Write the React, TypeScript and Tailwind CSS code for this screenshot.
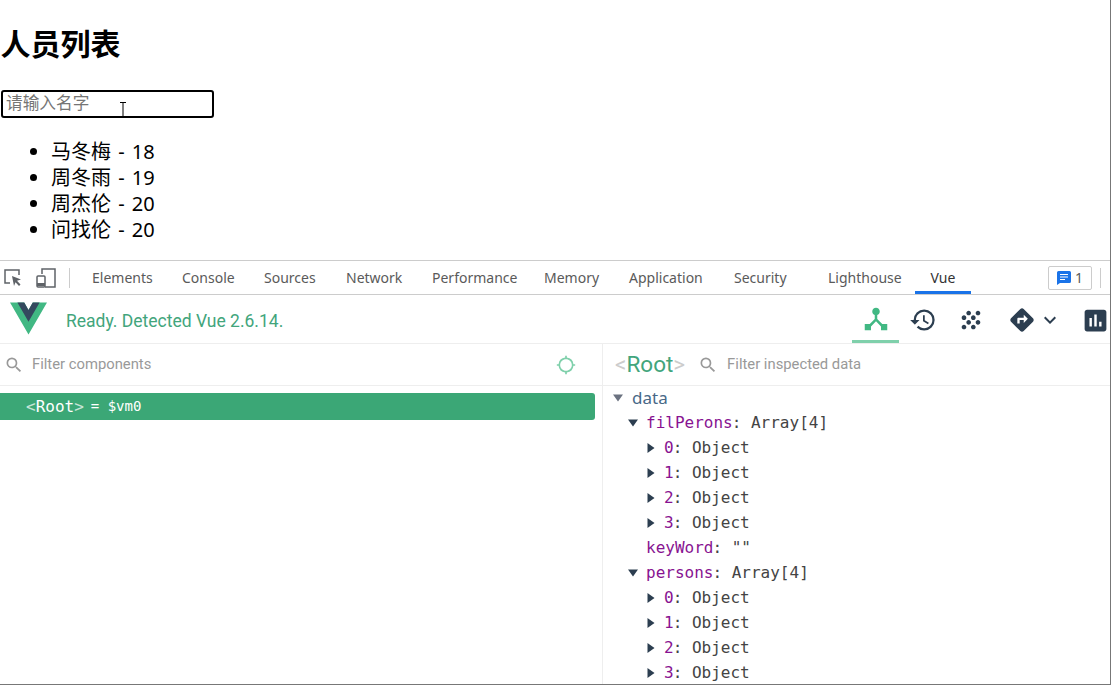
import type { ReactNode } from "react";
import { MdAssessment, MdDeviceHub, MdDirections, MdGpsNotFixed, MdGrain, MdHistory, MdKeyboardArrowDown, MdSearch } from "react-icons/md";

const people = ["马冬梅 - 18", "周冬雨 - 19", "周杰伦 - 20", "问找伦 - 20"];

const tabs = [
	{ label: "Elements", className: "w-[90px]" },
	{ label: "Console", className: "w-[82px]" },
	{ label: "Sources", className: "w-[82px]" },
	{ label: "Network", className: "w-[86px]" },
	{ label: "Performance", className: "w-[112px]" },
	{ label: "Memory", className: "w-[85px]" },
	{ label: "Application", className: "w-[105px]" },
	{ label: "Security", className: "w-[94px]" },
	{ label: "Lighthouse", className: "w-[92px]" },
];

const cjk = "font-['Noto_Sans','Noto_Sans_CJK_SC',sans-serif]";
const ui = "font-['Noto_Sans',sans-serif]";
const mono = "font-['DejaVu_Sans_Mono',monospace]";

function Arrow(props: Readonly<{ open?: boolean; muted?: boolean }>): ReactNode {
	const { open, muted } = props;

	return (
		<svg className="h-[10px] w-[10px] shrink-0" viewBox="0 0 10 10">
			<path d={open ? "M0 1.5h10L5 8.5z" : "M1.5 0v10L8.5 5z"} fill={muted ? "#6b7280" : "#2c3e50"} />
		</svg>
	);
}

function Row(props: Readonly<{ label: string; value: string; indent: string; arrow?: "open" | "closed" }>): ReactNode {
	const { label, value, indent, arrow } = props;

	return (
		<div className={`flex h-[25px] items-center ${indent}`}>
			{arrow ? (
				<div className="mr-2 flex w-[10px]">
					<Arrow open={arrow === "open"} />
				</div>
			) : null}
			<span className="text-[#881391]">{label}</span>
			<span className="ml-[-1px] text-[#444]">: {value}</span>
		</div>
	);
}

function ObjectRows(): ReactNode {
	return (
		<>
			{["0", "1", "2", "3"].map((key) => (
				<Row arrow="closed" indent="pl-[43px]" key={key} label={key} value="Object" />
			))}
		</>
	);
}

export default function App(): ReactNode {
	return (
		<div className="flex h-[685px] w-[1111px] flex-col overflow-hidden border-r border-b border-[#777] bg-white text-black">
			<div className={`h-[260px] shrink-0 pl-px ${cjk}`}>
				<h1 className="ml-[-0.5px] pt-[22px] text-[30px] leading-[44px] font-bold">人员列表</h1>
				<div className="relative mt-[24px] w-[213px]">
					<input
						className="block h-[28px] w-full rounded-[3px] border-2 border-black pb-[3px] pl-[3px] text-[16.700px] outline-none placeholder:text-[#757575]"
						placeholder="请输入名字"
						readOnly
					/>
					{/* text cursor caught in the capture */}
					<svg className="absolute top-[12px] left-[118px] h-[16px] w-[8px]" fill="none" stroke="#000" viewBox="0 0 8 16">
						<path d="M1 .5h6M4 .5v15M1 15.500h6" />
					</svg>
				</div>
				<ul className="mt-[21px] list-disc pl-[50px] text-[20px] leading-[26px] [word-spacing:2px]">
					{people.map((person) => (
						<li key={person}>{person}</li>
					))}
				</ul>
			</div>

			<div className={`flex h-[35px] shrink-0 items-center border-y border-[#ccc] text-[14px] text-[#5a5a5a] ${ui}`}>
				<svg className="ml-[4px] h-[18px] w-[19px]" fill="none" stroke="#5f6368" strokeWidth="1.5" viewBox="0 0 19 18">
					<path d="M6 14H1V1h14v5" />
					<path d="M8 7l9 3.5-4 1.2 3.5 3.8-1.5 1.5-3.5-3.8L10 17z" fill="#5f6368" stroke="none" />
				</svg>
				<svg className="ml-[13px] h-[20px] w-[20px]" fill="none" stroke="#5f6368" strokeWidth="1.5" viewBox="0 0 20 20">
					<path d="M6 6V1h13v18H9" />
					<rect height="11" rx="1" width="8" x="1" y="8" />
					<path d="M1 16.500h8" strokeWidth="3" />
				</svg>
				<div className="mr-[17px] ml-[13px] h-[20px] w-px bg-[#ccc]" />
				{tabs.map((tab) => (
					<div className={`shrink-0 pl-[5px] ${tab.className}`} key={tab.label}>
						{tab.label}
					</div>
				))}
				<div className="flex h-full w-[56px] shrink-0 items-center justify-center border-b-[3px] border-[#1a73e8] pt-[3px] text-[#333]">
					Vue
				</div>
				<div className="ml-[77px] flex h-[24px] w-[44px] shrink-0 items-center justify-center gap-[4px] rounded-[2px] border border-[#ccc]">
					<svg className="h-[14px] w-[14px]" viewBox="0 0 14 14">
						<path d="M1.5 0h11A1.5 1.5 0 0 1 14 1.5v9a1.5 1.5 0 0 1-1.5 1.5H3l-3 2V1.5A1.5 1.5 0 0 1 1.500 0z" fill="#1a73e8" />
						<path d="M3 3.500h8M3 6h8M3 8.500h5" stroke="#fff" />
					</svg>
					<span>1</span>
				</div>
				<div className="ml-[8px] h-[20px] w-px bg-[#ccc]" />
			</div>

			<div className="flex h-[49px] shrink-0 items-center border-b border-[#eee] font-['Roboto',sans-serif]">
				<svg className="mb-[1px] ml-[10px] h-[33px] w-[37px] shrink-0" viewBox="0 0 261.76 226.69">
					<path d="M161.096.001l-30.225 52.351L100.647.001H-.005l130.877 226.688L261.749.001z" fill="#41b883" />
					<path d="M161.096.001l-30.225 52.351L100.647.001H52.346l78.526 136.01L209.398.001z" fill="#34495e" />
				</svg>
				<span className="mt-[4px] ml-[19px] w-[217px] shrink-0 text-[17.500px] whitespace-nowrap text-[#42a57c]">Ready. Detected Vue 2.6.14.</span>
				<div className="ml-[569px] flex h-full w-[47px] shrink-0 items-center justify-center border-b-[3px] border-[#7fd0ab] pt-[2px] text-[#41b883]">
					<MdDeviceHub size={30} />
				</div>
				<MdHistory className="mt-[2px] ml-[10px] shrink-0 text-[#2c3e50]" size={28} />
				<MdGrain className="mt-[2px] ml-[20px] shrink-0 text-[#2c3e50]" size={28} />
				<MdDirections className="mt-[2px] ml-[23px] shrink-0 text-[#2c3e50]" size={28} />
				<MdKeyboardArrowDown className="mt-[2px] ml-[2px] shrink-0 text-[#2c3e50]" size={24} />
				<MdAssessment className="mt-[2px] ml-[19px] shrink-0 text-[#2c3e50]" size={29} />
			</div>

			<div className="flex min-h-0 flex-1">
				<div className="w-[603px] shrink-0 border-r border-[#eee]">
					<div className="flex h-[42px] items-center border-b border-[#eee] font-['Roboto',sans-serif] text-[14.800px] text-[#999]">
						<MdSearch className="ml-[4px] shrink-0" size={20} />
						<span className="ml-[8px]">Filter components</span>
						<MdGpsNotFixed className="ml-[405px] shrink-0 text-[#7fd0ab]" size={20} />
					</div>
					<div className={`mt-[7px] mr-[7px] flex h-[27px] items-center rounded-r-[3px] bg-[#3ba776] pl-[26px] text-[16px] text-white ${mono}`}>
						<span>
							<span className="text-[#c5e4d6]">&lt;</span>
							Root
							<span className="text-[#c5e4d6]">&gt;</span>
						</span>
						<span className="ml-[7px] text-[14px]">= $vm0</span>
					</div>
				</div>
				<div className="min-w-0 flex-1">
					<div className="flex h-[42px] items-center border-b border-[#eee] font-['Roboto',sans-serif] text-[14.800px] text-[#999]">
						<span className="ml-[12px] text-[22.500px] text-[#ccc]">&lt;</span>
						<span className="text-[22.500px] text-[#42a57c]">Root</span>
						<span className="text-[22.500px] text-[#ccc]">&gt;</span>
						<MdSearch className="ml-[13px] shrink-0" size={20} />
						<span className="ml-[9px]">Filter inspected data</span>
					</div>
					<div className="mt-[-1px] overflow-hidden text-[16px] leading-[25px]">
						<div className={`flex h-[25px] items-center pl-[10px] text-[#486887] ${ui}`}>
							<div className="mr-[9px] flex w-[10px]">
								<Arrow muted open />
							</div>
							<span className="text-[17px]">data</span>
						</div>
						<div className={mono}>
							<Row arrow="open" indent="pl-[25px]" label="filPerons" value="Array[4]" />
							<ObjectRows />
							<Row indent="pl-[43px]" label="keyWord" value={'""'} />
							<Row arrow="open" indent="pl-[25px]" label="persons" value="Array[4]" />
							<ObjectRows />
						</div>
					</div>
				</div>
			</div>
		</div>
	);
}
